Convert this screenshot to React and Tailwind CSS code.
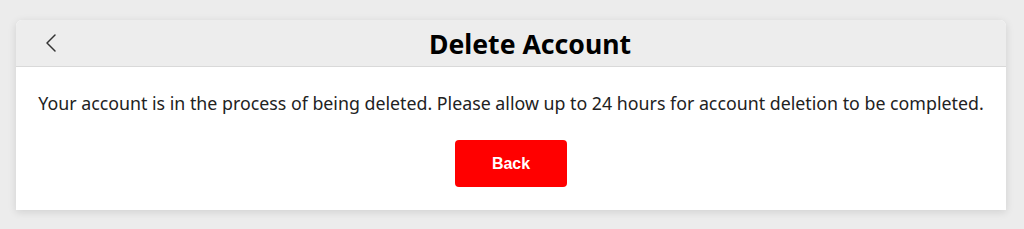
import React from 'react';

const App = () => {
  return (
    <div className="min-h-[229px] bg-[#ececec] px-4 pt-5 pb-5" style={{ fontFamily: '"Noto Sans", sans-serif' }}>
      <div className="w-[990px] bg-white rounded-t-md shadow-[0_2px_8px_rgba(0,0,0,0.12)]">
        {/* Cabeçalho */}
        <div className="h-[47px] flex items-center bg-[#ededed] border-b border-[#d9d9d9] rounded-t-md">
          <button className="w-[54px] h-full flex items-center justify-center pl-[16px] text-[#333]">
            <svg width="12" height="20" viewBox="0 0 12 20" fill="none" stroke="currentColor" strokeWidth="1.5" strokeLinecap="round" strokeLinejoin="round">
              <path d="M10 2 2 10l8 8" />
            </svg>
          </button>
          <h1 className="flex-1 text-center text-[26.6px] font-bold text-black leading-none pr-[16px] pt-[3px]">Delete Account</h1>
        </div>

        {/* Conteúdo */}
        <div className="flex flex-col items-center pt-[24px] pb-[23px]">
          <p className="text-[17.8px] text-[#222] leading-[24px] whitespace-nowrap">
            Your account is in the process of being deleted. Please allow up to 24 hours for account deletion to be completed.
          </p>
          <button
            className="mt-[25px] w-[112px] h-[47px] rounded-[4px] bg-[#ff0000] text-white text-[16px] font-bold"
            style={{ fontFamily: '"Liberation Sans", Arial, sans-serif' }}
          >
            Back
          </button>
        </div>
      </div>
    </div>
  );
};

export default App;
